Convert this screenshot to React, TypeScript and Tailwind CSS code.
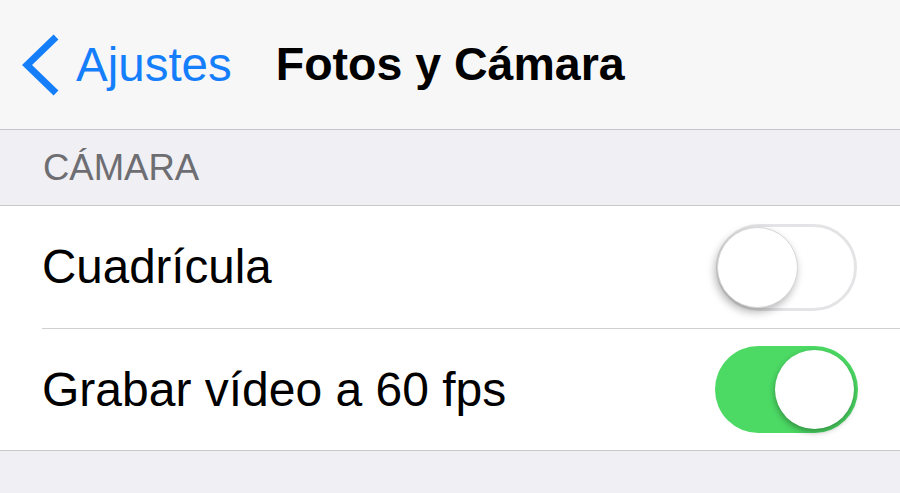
import React from "react";

const font = { fontFamily: '"Liberation Sans", Arial, sans-serif' };

function Toggle({ on }: { on: boolean }) {
  if (on) {
    return (
      <div className="relative h-[87px] w-[143px] rounded-full bg-[#4cd964]">
        <div className="absolute right-[4px] top-[4px] h-[79px] w-[79px] rounded-full bg-white shadow-[0_3px_6px_rgba(0,0,0,0.35)]" />
      </div>
    );
  }
  return (
    <div className="relative h-[87px] w-[141px] rounded-full border-[3px] border-[#e4e4e6] bg-white">
      <div className="absolute left-[-2px] top-[0px] h-[81px] w-[81px] rounded-full border border-[#d6d6d6] bg-white shadow-[-2px_4px_8px_rgba(0,0,0,0.3)]" />
    </div>
  );
}

export default function App() {
  return (
    <div className="h-[493px] w-[900px] overflow-hidden bg-[#efeff4]" style={font}>
      {/* barra de navegación */}
      <div className="flex h-[130px] items-center border-b border-[#c6c6cb] bg-[#f7f7f8]">
        <div className="flex items-center pl-[22px] text-[#157efb]">
          <svg width="40" height="62" viewBox="0 0 40 62" className="mr-[14px]">
            <path d="M34 3 L5 31 L34 59" fill="none" stroke="#157efb" strokeWidth="7" />
          </svg>
          <span className="text-[47.5px] leading-none">Ajustes</span>
        </div>
        <span className="ml-[44px] text-[46.5px] font-bold leading-none text-black">Fotos y Cámara</span>
      </div>

      {/* cabecera de sección */}
      <div className="flex h-[76px] items-center border-b border-[#c8c7cc] pl-[43px] pt-[2px]">
        <span className="text-[36.5px] leading-none text-[#6d6d72]">CÁMARA</span>
      </div>

      {/* filas */}
      <div className="border-b border-[#c8c7cc] bg-white">
        <div className="flex h-[122px] items-center justify-between pl-[42px] pr-[43px]">
          <span className="text-[47.5px] leading-none text-black">Cuadrícula</span>
          <Toggle on={false} />
        </div>
        <div className="ml-[42px] h-px bg-[#d0d0d4]" />
        <div className="flex h-[121px] items-center justify-between pl-[42px] pr-[42px]">
          <span className="text-[48px] leading-none text-black">Grabar vídeo a 60 fps</span>
          <Toggle on={true} />
        </div>
      </div>
    </div>
  );
}
